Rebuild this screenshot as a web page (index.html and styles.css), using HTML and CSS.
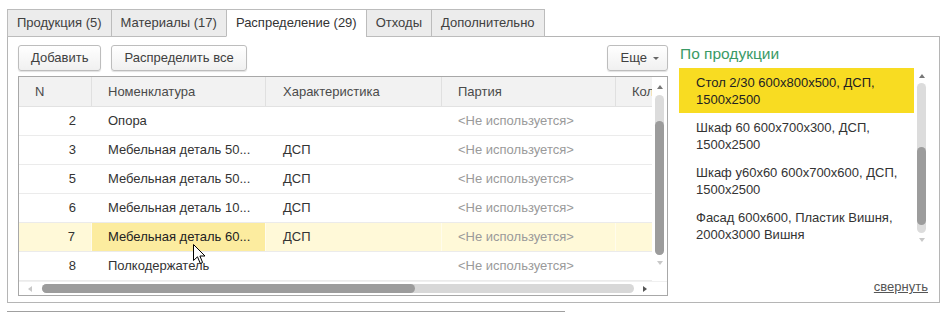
FILE: index.html
```html
<!DOCTYPE html>
<html lang="ru">
<head>
<meta charset="utf-8">
<title>Распределение</title>
<link rel="stylesheet" href="styles.css">
</head>
<body>
<div class="tabs">
  <div class="tab">Продукция (5)</div>
  <div class="tab">Материалы (17)</div>
  <div class="tab active">Распределение (29)</div>
  <div class="tab">Отходы</div>
  <div class="tab">Дополнительно</div>
</div>
<div class="frame">
  <div class="left">
    <div class="toolbar">
      <div class="btn">Добавить</div>
      <div class="btn">Распределить все</div>
      <div class="spacer"></div>
      <div class="btn more">Еще <span class="caret"></span></div>
    </div>
    <div class="table">
      <div class="table-main">
        <div class="cols">
          <div class="row head">
            <div class="c c-n">N</div>
            <div class="c c-nom">Номенклатура</div>
            <div class="c c-ch">Характеристика</div>
            <div class="c c-p">Партия</div>
            <div class="c c-k">Кол</div>
          </div>
          <div class="row">
            <div class="c c-n num">2</div>
            <div class="c c-nom">Опора</div>
            <div class="c c-ch"></div>
            <div class="c c-p muted">&lt;Не используется&gt;</div>
            <div class="c c-k"></div>
          </div>
          <div class="row">
            <div class="c c-n num">3</div>
            <div class="c c-nom">Мебельная деталь 50...</div>
            <div class="c c-ch">ДСП</div>
            <div class="c c-p muted">&lt;Не используется&gt;</div>
            <div class="c c-k"></div>
          </div>
          <div class="row">
            <div class="c c-n num">5</div>
            <div class="c c-nom">Мебельная деталь 50...</div>
            <div class="c c-ch">ДСП</div>
            <div class="c c-p muted">&lt;Не используется&gt;</div>
            <div class="c c-k"></div>
          </div>
          <div class="row">
            <div class="c c-n num">6</div>
            <div class="c c-nom">Мебельная деталь 10...</div>
            <div class="c c-ch">ДСП</div>
            <div class="c c-p muted">&lt;Не используется&gt;</div>
            <div class="c c-k"></div>
          </div>
          <div class="row current">
            <div class="c c-n num">7</div>
            <div class="c c-nom sel">Мебельная деталь 60...</div>
            <div class="c c-ch">ДСП</div>
            <div class="c c-p muted">&lt;Не используется&gt;</div>
            <div class="c c-k"></div>
          </div>
          <div class="row">
            <div class="c c-n num">8</div>
            <div class="c c-nom">Полкодержатель</div>
            <div class="c c-ch"></div>
            <div class="c c-p muted">&lt;Не используется&gt;</div>
            <div class="c c-k"></div>
          </div>
        </div>
        <div class="vscroll">
          <span class="arr up"></span>
          <div class="vtrack"><div class="vthumb"></div></div>
          <span class="arr down"></span>
        </div>
      </div>
      <div class="hscroll">
        <span class="arr left-a"></span>
        <div class="htrack"><div class="hthumb"></div></div>
        <span class="arr right-a"></span>
      </div>
    </div>
  </div>
  <div class="right">
    <div class="title">По продукции</div>
    <div class="list-wrap">
      <div class="list">
        <div class="item selected">Стол 2/30 600x800x500, ДСП,<br>1500x2500</div>
        <div class="item">Шкаф 60 600x700x300, ДСП,<br>1500x2500</div>
        <div class="item">Шкаф у60x60 600x700x600, ДСП,<br>1500x2500</div>
        <div class="item">Фасад 600x600, Пластик Вишня,<br>2000x3000 Вишня</div>
      </div>
      <div class="lscroll">
        <span class="arr up"></span>
        <div class="ltrack"><div class="lthumb"></div></div>
        <span class="arr down"></span>
      </div>
    </div>
    <div class="foot"><a class="collapse" href="#">свернуть</a></div>
  </div>
</div>
<div class="bottom-line"></div>
<svg class="cursor" width="13" height="21" viewBox="0 0 13 21" aria-hidden="true">
  <path d="M0.5 0.5 L0.5 16.5 L4.5 12.8 L7.3 19.5 L9.6 18.5 L6.9 12 L12 12 Z" fill="#fff" stroke="#000" stroke-width="1" stroke-linejoin="round"/>
</svg>
</body>
</html>
```

FILE: styles.css
```css
* { box-sizing: border-box; }

body {
  margin: 0;
  background: #fff;
  font-family: "Liberation Sans", Arial, sans-serif;
  font-size: 13px;
  color: #333;
  position: relative;
  width: 948px;
  height: 316px;
  overflow: hidden;
}

.tabs {
  display: flex;
  padding: 9px 0 0 7px;
  margin-bottom: -1px;
  position: relative;
  z-index: 1;
}

.tab {
  height: 28px;
  line-height: 26px;
  padding: 0 9px;
  border: 1px solid #bcbcbc;
  background: #ececec;
  color: #404040;
  margin-right: -1px;
}

.tab.active {
  background: #fff;
  border-bottom-color: #fff;
  color: #333;
}

.frame {
  margin-left: 7px;
  width: 933px;
  height: 267px;
  border: 1px solid #b5b5b5;
  padding: 8px 9px 0 10px;
  display: flex;
  gap: 11px;
}

.left {
  width: 650px;
  display: flex;
  flex-direction: column;
}

.toolbar {
  display: flex;
  height: 26px;
  gap: 10px;
  margin-bottom: 5px;
}

.spacer { flex: 1; }

.btn {
  height: 26px;
  line-height: 24px;
  padding: 0 12px;
  border: 1px solid #bdbdbd;
  border-radius: 3px;
  background: linear-gradient(#ffffff, #f0f0f0);
  box-shadow: 0 1px 1px rgba(0,0,0,0.12);
  color: #404040;
  white-space: nowrap;
}

.btn.more {
  padding: 0 8px 0 13px;
  display: flex;
  align-items: center;
  gap: 6px;
}

.caret {
  width: 0;
  height: 0;
  border-left: 3px solid transparent;
  border-right: 3px solid transparent;
  border-top: 3px solid #666;
  margin-top: 1px;
}

.table {
  height: 220px;
  border: 1px solid #a8a8a8;
  display: flex;
  flex-direction: column;
}

.table-main {
  display: flex;
  height: 204px;
}

.cols {
  width: 633px;
  overflow: hidden;
}

.row {
  display: flex;
  height: 29px;
  line-height: 28px;
  border-bottom: 1px solid #ebebeb;
  white-space: nowrap;
}

.row.head {
  height: 30px;
  line-height: 29px;
  background: #f2f2f2;
  border-bottom: 1px solid #e2e2e2;
  color: #4a4a4a;
}

.c {
  flex: none;
  overflow: hidden;
  padding-left: 16px;
}

.head .c { border-right: 1px solid #e0e0e0; }
.head .c-k { border-right: none; }

.c-n { width: 73px; }
.c-nom { width: 174px; }
.c-ch { width: 176px; padding-left: 17px; }
.c-p { width: 174px; }
.c-k { width: 60px; }

.num {
  text-align: right;
  padding-left: 0;
  padding-right: 16px;
}

.muted { color: #9a9a9a; }

.row.current { background: #fff9d8; }
.row.current .c { border-right: 1px solid #fffcec; }
.row.current .sel { background: #fcec9f; color: #222; }

.vscroll {
  width: 15px;
  background: #fff;
  display: flex;
  flex-direction: column;
  align-items: center;
  padding-top: 8px;
}

.arr {
  width: 0;
  height: 0;
  flex: none;
}

.arr.up {
  border-left: 3px solid transparent;
  border-right: 3px solid transparent;
  border-bottom: 4px solid #777;
}

.arr.down {
  border-left: 3px solid transparent;
  border-right: 3px solid transparent;
  border-top: 4px solid #c8c8c8;
}

.vtrack {
  width: 9px;
  height: 160px;
  margin: 6px 0 6px;
  background: #dcdcdc;
  border-radius: 5px;
  position: relative;
}

.vthumb {
  position: absolute;
  left: 0;
  right: 0;
  top: 26px;
  bottom: 0;
  background: #9c9c9c;
  border-radius: 5px;
}

.hscroll {
  flex: 1;
  display: flex;
  align-items: center;
  padding: 0 0 0 9px;
  border-top: 1px solid #f0f0f0;
}

.arr.left-a {
  border-top: 3px solid transparent;
  border-bottom: 3px solid transparent;
  border-right: 4px solid #c8c8c8;
}

.arr.right-a {
  border-top: 3px solid transparent;
  border-bottom: 3px solid transparent;
  border-left: 4px solid #555;
  margin-left: 9px;
}

.htrack {
  width: 592px;
  height: 9px;
  margin-left: 10px;
  background: #d8d8d8;
  border-radius: 5px;
  position: relative;
}

.hthumb {
  position: absolute;
  top: 0;
  bottom: 0;
  left: 0;
  width: 373px;
  background: #9c9c9c;
  border-radius: 5px;
}

.right {
  width: 250px;
  display: flex;
  flex-direction: column;
}

.title {
  height: 23px;
  line-height: 18px;
  font-size: 15.5px;
  color: #3a9a66;
  padding-left: 1px;
}

.list-wrap {
  display: flex;
  height: 176px;
}

.list {
  width: 235px;
}

.item {
  padding: 6px 8px 5px 17px;
  line-height: 17px;
  height: 45px;
  color: #333;
}

.item.selected {
  background: #f8dc22;
  color: #222;
}

.lscroll {
  width: 15px;
  display: flex;
  flex-direction: column;
  align-items: center;
  padding-top: 6px;
}

.ltrack {
  width: 9px;
  height: 150px;
  margin: 5px 0 5px;
  background: #dcdcdc;
  border-radius: 5px;
  position: relative;
}

.lthumb {
  position: absolute;
  left: 0;
  right: 0;
  top: 64px;
  bottom: 8px;
  background: #9c9c9c;
  border-radius: 5px;
}

.foot {
  flex: 1;
  display: flex;
  justify-content: flex-end;
  align-items: flex-end;
  padding-bottom: 7px;
  padding-right: 1px;
}

.collapse {
  color: #555;
  text-decoration: underline;
  line-height: 16px;
}

.bottom-line {
  margin: 8px 0 0 7px;
  width: 558px;
  height: 1px;
  background: #a0a0a0;
}

.cursor {
  position: absolute;
  left: 193px;
  top: 244px;
}
```
